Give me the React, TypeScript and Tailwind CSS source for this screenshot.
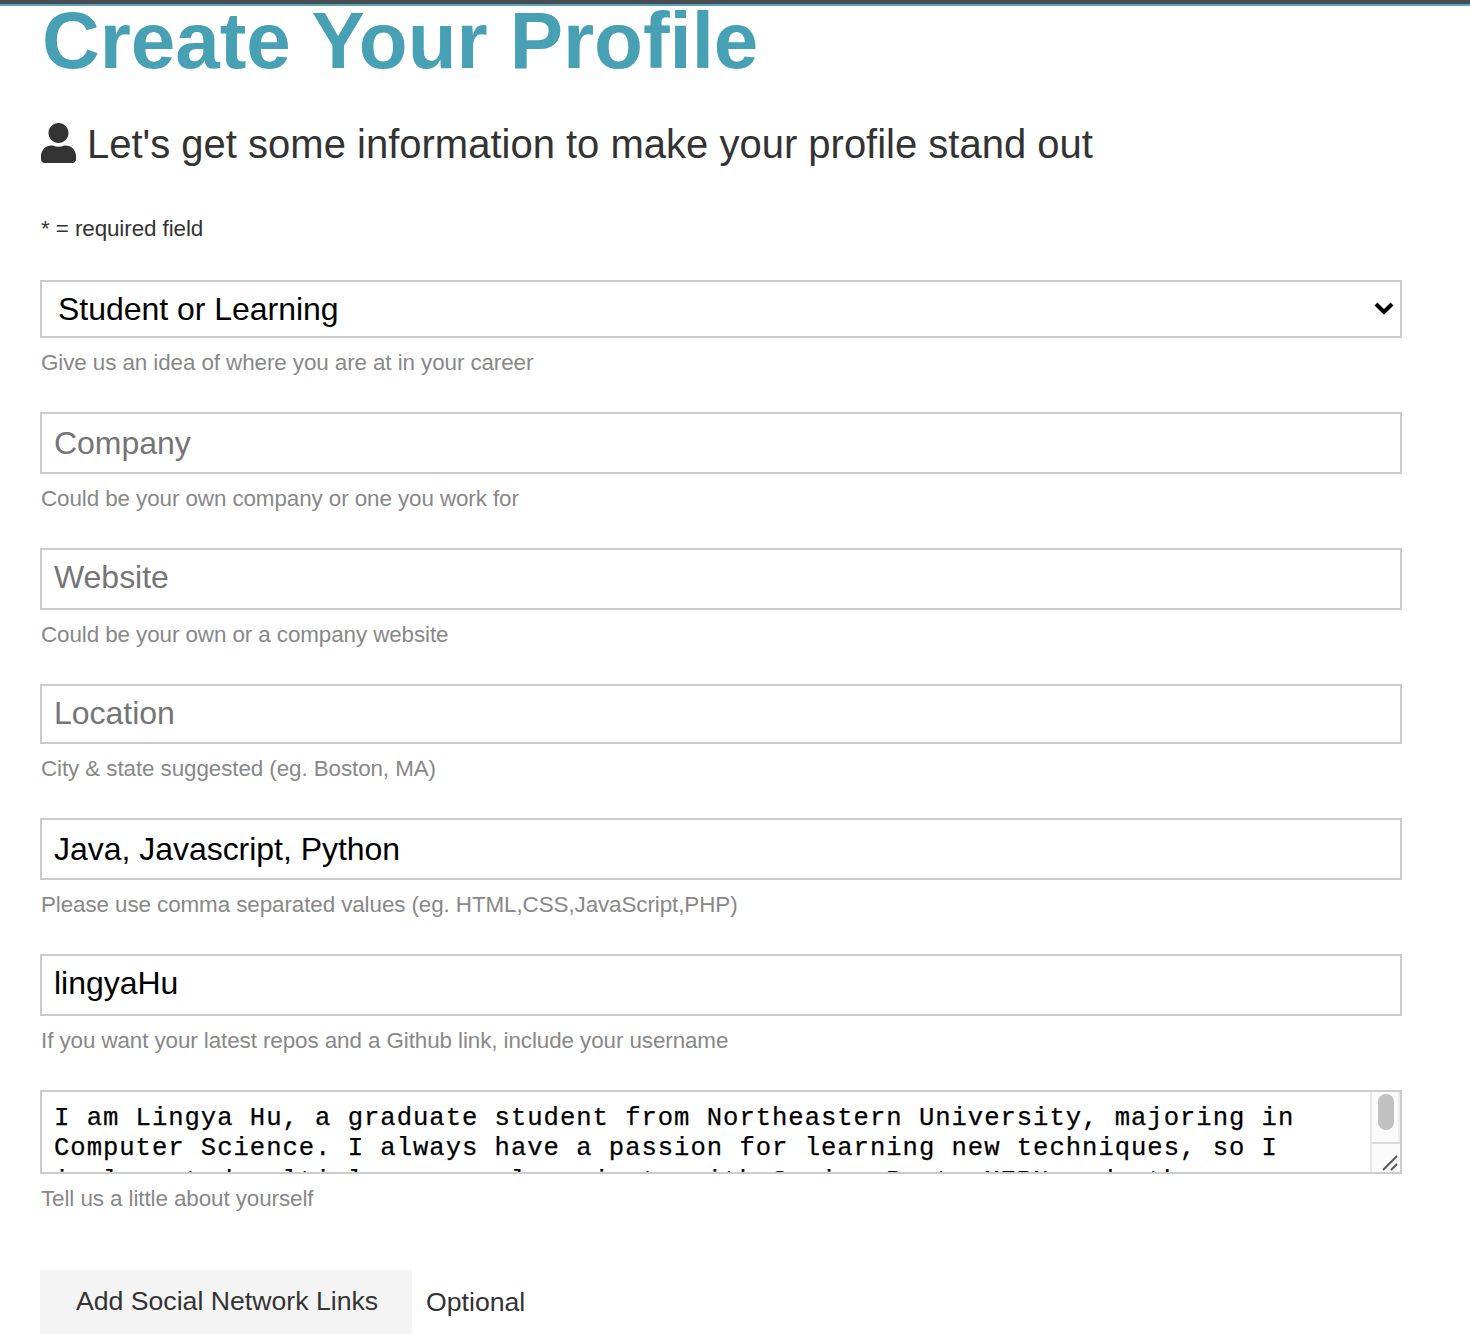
import { FaUser } from 'react-icons/fa';

type FieldProps = {
  placeholder?: string;
  value?: string;
  hint: string;
  inputClass: string;
  className: string;
};

function Hint({ children }: { children: string }) {
  return <small className="mt-[11px] block pl-px text-[22.4px] leading-[28px] tracking-[-0.085px] text-[#888]">{children}</small>;
}

function Field({ placeholder, value, hint, inputClass, className }: FieldProps) {
  return (
    <div className={className}>
      <input
        type="text"
        placeholder={placeholder}
        defaultValue={value}
        className={`block w-full rounded-none border-2 border-[#ccc] bg-white px-3 text-[32px] leading-[36px] tracking-[-0.03px] text-black outline-none placeholder:text-[#757575] ${inputClass}`}
      />
      <Hint>{hint}</Hint>
    </div>
  );
}

export default function App() {
  return (
    <div className="h-[1334px] overflow-hidden bg-white font-['Liberation_Sans',Arial,sans-serif] text-[#333]">
      <div className="h-[6px] border-b-2 border-[#56a5b8] bg-[#484b52]" />
      <main className="ml-10 w-[1362px]">
        <h1 className="h-[78px] pl-[2px] whitespace-nowrap text-[80px] leading-[69px] font-bold tracking-[-0.05px] text-[#48a0b5]">Create Your Profile</h1>
        <p className="mt-[35px] flex h-[49px] items-center whitespace-nowrap text-[40px] leading-[48px]">
          <FaUser className="mr-[12px] mb-px ml-px h-10 w-[35px] shrink-0" />
          <span className="-ml-px">Let's get some information to make your profile stand out</span>
        </p>
        <small className="mt-[47px] block pl-px text-[22.4px] leading-[28px] tracking-[-0.085px]">* = required field</small>

        <form className="mt-[37px]">
          <div className="h-[132px]">
            <div className="relative">
              <select className="block h-[58px] w-full appearance-none rounded-none border-2 border-[#ccc] bg-white px-4 text-[32px] leading-[36px] tracking-[-0.03px] text-black outline-none">
                <option>Student or Learning</option>
              </select>
              <svg className="absolute top-[22px] right-[8px] h-[13px] w-[20px]" viewBox="0 0 20 13" fill="none" stroke="#000" strokeWidth="4">
                <path d="M2 2l8 8 8-8" />
              </svg>
            </div>
            <Hint>Give us an idea of where you are at in your career</Hint>
          </div>
          <Field className="h-[136px]" inputClass="h-[62px]" placeholder="Company" hint="Could be your own company or one you work for" />
          <Field className="h-[136px]" inputClass="h-[62px] pb-1" placeholder="Website" hint="Could be your own or a company website" />
          <Field className="h-[134px]" inputClass="h-[60px] pb-0.5" placeholder="Location" hint="City & state suggested (eg. Boston, MA)" />
          <Field className="h-[136px]" inputClass="h-[62px]" value="Java, Javascript, Python" hint="Please use comma separated values (eg. HTML,CSS,JavaScript,PHP)" />
          <Field className="h-[136px]" inputClass="h-[62px] pb-1" value="lingyaHu" hint="If you want your latest repos and a Github link, include your username" />
          <div className="h-[180px]">
            <div className="flex h-[84px] border-2 border-[#ccc]">
              <div
                role="textbox"
                aria-multiline="true"
                className="h-20 flex-1 overflow-hidden bg-white pt-[12px] pl-3 font-['Liberation_Mono',monospace] text-[25.6px] leading-[30px] tracking-[0.96px] whitespace-pre text-black [-webkit-text-stroke:0.25px_black]"
              >
                <p>I am Lingya Hu, a graduate student from Northeastern University, majoring in</p>
                <p>Computer Science. I always have a passion for learning new techniques, so I</p>
                <p className="mt-[3px]">implemented multiple personal projects with Spring Boot, MERN and other</p>
              </div>
              <div className="flex w-[30px] flex-col border-l-2 border-[#e7e7e7] bg-[#fafafa]">
                <div className="h-[50px] border-r-2 border-[#ededed] pt-[2px] pl-[6px]">
                  <div className="h-9 w-4 rounded-full bg-[#c1c1c1]" />
                </div>
                <div className="flex h-[30px] items-end justify-end border-t-2 border-[#d9d9d9] pr-[2px] pb-px">
                  <svg className="h-[16px] w-[16px]" viewBox="0 0 16 16" stroke="#555" strokeWidth="1.8">
                    <path d="M1 15L15 1M9 15l6-6" />
                  </svg>
                </div>
              </div>
            </div>
            <Hint>Tell us a little about yourself</Hint>
          </div>
          <div className="flex items-start">
            <button type="button" className="h-[64px] w-[372px] bg-[#f4f4f4] pb-0.5 pl-0.5 text-[26.67px] leading-[32px] text-[#333]">Add Social Network Links</button>
            <span className="ml-[14px] pt-4 text-[26.67px] leading-[32px]">Optional</span>
          </div>
        </form>
      </main>
    </div>
  );
}
